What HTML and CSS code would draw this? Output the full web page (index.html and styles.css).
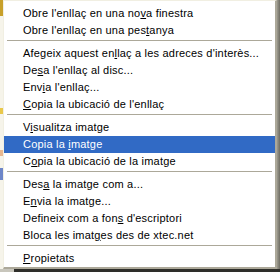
FILE: index.html
```html
<!DOCTYPE html>
<html>
<head>
    <title>Menú contextual</title>
    <link rel="stylesheet" href="styles.css">
</head>
<body>
    <div class="desk">
        <div class="edge-left"></div>
        <div class="menu">
            <div class="item">Obre l'enllaç en una no<u>v</u>a finestra</div>
            <div class="item">Obre l'enllaç en una pes<u>t</u>anya</div>
            <div class="sep"></div>
            <div class="item">Afegeix aquest en<u>l</u>laç a les adreces d'interès...</div>
            <div class="item">De<u>s</u>a l'enllaç al disc...</div>
            <div class="item">Env<u>i</u>a l'enllaç...</div>
            <div class="item"><u>C</u>opia la ubicació de l'enllaç</div>
            <div class="sep"></div>
            <div class="item">V<u>i</u>sualitza imatge</div>
            <div class="item active">Copia la <u>i</u>matge</div>
            <div class="item">C<u>o</u>pia la ubicació de la imatge</div>
            <div class="sep"></div>
            <div class="item">Des<u>a</u> la imatge com a...</div>
            <div class="item">E<u>n</u>via la imatge...</div>
            <div class="item">Defineix com a fon<u>s</u> d'escriptori</div>
            <div class="item">Bloca les imat<u>g</u>es des de xtec.net</div>
            <div class="sep"></div>
            <div class="item"><u>P</u>ropietats</div>
        </div>
        <div class="edge-right"></div>
    </div>
    <div class="edge-bottom"></div>
</body>
</html>
```

FILE: styles.css
```css
* {
    margin: 0;
    padding: 0;
    box-sizing: border-box;
}

body {
    width: 280px;
    height: 272px;
    overflow: hidden;
    background: #3a3a36;
    font-family: 'Liberation Sans', Arial, sans-serif;
    font-size: 11px;
    letter-spacing: 0.2px;
    color: #000;
}

.desk {
    display: flex;
    height: 269px;
}

.edge-left {
    width: 3px;
    background: linear-gradient(to bottom, #c8a02a 0, #c8a02a 16px, #f6f4ea 16px, #f6f4ea 108px, #e9c84a 108px, #e9c84a 114px, #f6f4ea 114px, #f6f4ea 150px, #e8b890 150px, #e8b890 156px, #f6f4ea 156px, #f6f4ea 168px, #6d86c8 168px, #6d86c8 180px, #f6f4ea 180px);
}

.edge-right {
    width: 3px;
    background: linear-gradient(to right, #9c9a8e, #6e6c62);
}

.menu {
    flex: 1;
    background: #fff;
    border-top: 1px solid #f1efe2;
    border-left: 1px solid #f1efe2;
    border-right: 2px solid #aca899;
    border-bottom: 2px solid #aca899;
    padding-top: 4px;
}

.item {
    height: 17px;
    line-height: 17px;
    padding-left: 19px;
    white-space: nowrap;
}

.item u {
    text-underline-offset: 1px;
}

.item.active {
    background: #316ac5;
    color: #fff;
}

.sep {
    height: 6px;
    margin: 0 3px;
    padding-top: 1px;
}

.sep::before {
    content: '';
    display: block;
    height: 2px;
    border-top: 1px solid #aca899;
    border-bottom: 1px solid #fff;
}

.edge-bottom {
    height: 3px;
    background: linear-gradient(to right, #c8c6bc 0, #c8c6bc 14px, #2e2e2a 14px);
}
```
